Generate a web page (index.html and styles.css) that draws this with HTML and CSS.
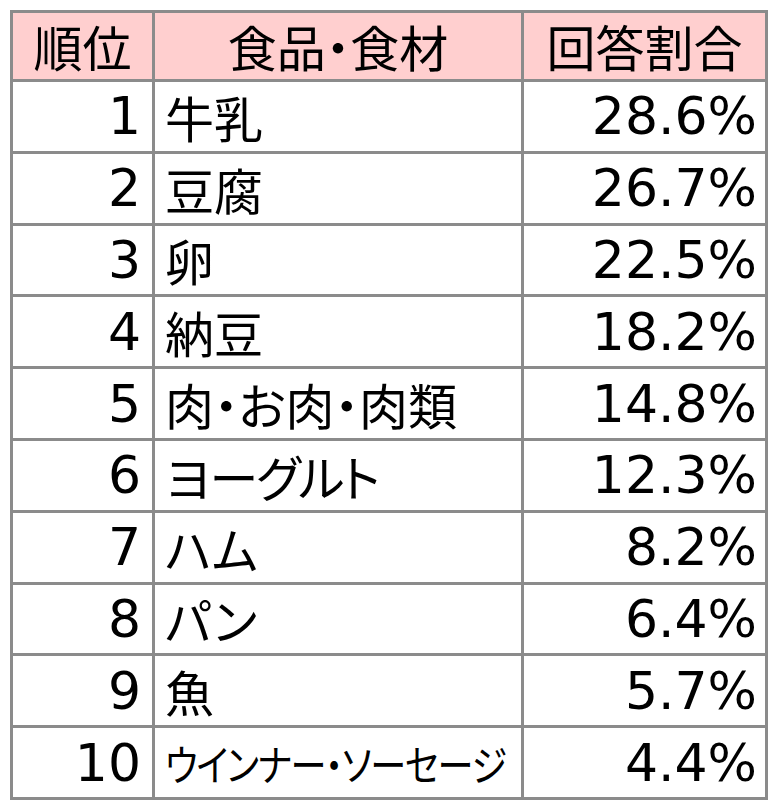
FILE: index.html
```html
<!DOCTYPE html>
<html lang="ja">
<head>
<meta charset="utf-8">
<title>ランキング</title>
<link rel="stylesheet" href="styles.css">
</head>
<body>
<div class="table">
  <div class="cell head">順位</div>
  <div class="cell head">食品・食材</div>
  <div class="cell head">回答割合</div>

  <div class="cell rank">1</div>
  <div class="cell name">牛乳</div>
  <div class="cell pct">28.6%</div>

  <div class="cell rank">2</div>
  <div class="cell name">豆腐</div>
  <div class="cell pct">26.7%</div>

  <div class="cell rank">3</div>
  <div class="cell name">卵</div>
  <div class="cell pct">22.5%</div>

  <div class="cell rank">4</div>
  <div class="cell name">納豆</div>
  <div class="cell pct">18.2%</div>

  <div class="cell rank">5</div>
  <div class="cell name">肉・お肉・肉類</div>
  <div class="cell pct">14.8%</div>

  <div class="cell rank">6</div>
  <div class="cell name kana">ヨーグルト</div>
  <div class="cell pct">12.3%</div>

  <div class="cell rank">7</div>
  <div class="cell name">ハム</div>
  <div class="cell pct">8.2%</div>

  <div class="cell rank">8</div>
  <div class="cell name">パン</div>
  <div class="cell pct">6.4%</div>

  <div class="cell rank">9</div>
  <div class="cell name">魚</div>
  <div class="cell pct">5.7%</div>

  <div class="cell rank">10</div>
  <div class="cell name"><span class="small">ウインナー・ソーセージ</span></div>
  <div class="cell pct">4.4%</div>
</div>
</body>
</html>
```
FILE: styles.css
```css
html, body {
  margin: 0;
  padding: 0;
  background: #ffffff;
}

body {
  font-family: "Noto Sans CJK JP", "Noto Sans", sans-serif;
  color: #000000;
}

.table {
  display: grid;
  grid-template-columns: 142px 369px 244px;
  grid-template-rows: 69px repeat(10, 71.8px);
  width: max-content;
  margin: 10px 0 0 10px;
  border-top: 3px solid #8b8b8b;
  border-left: 3px solid #8b8b8b;
}

.cell {
  box-sizing: border-box;
  display: flex;
  align-items: center;
  border-right: 3px solid #8b8b8b;
  border-bottom: 3px solid #8b8b8b;
  font-size: 49px;
  line-height: 1;
  white-space: nowrap;
}

.head {
  justify-content: center;
  background: #ffcfcf;
  padding-bottom: 2px;
  font-feature-settings: "palt";
}

.name {
  padding-left: 10px;
  font-feature-settings: "palt";
}

.kana {
  letter-spacing: -2px;
}

.small {
  display: inline-block;
  font-size: 42px;
  letter-spacing: -1.5px;
  transform: scaleX(0.86);
  transform-origin: left center;
}

.rank,
.pct {
  justify-content: flex-end;
  font-family: "DejaVu Sans", sans-serif;
  font-size: 52px;
}

.rank {
  padding-right: 11px;
}

.pct {
  padding-right: 8px;
}
```
